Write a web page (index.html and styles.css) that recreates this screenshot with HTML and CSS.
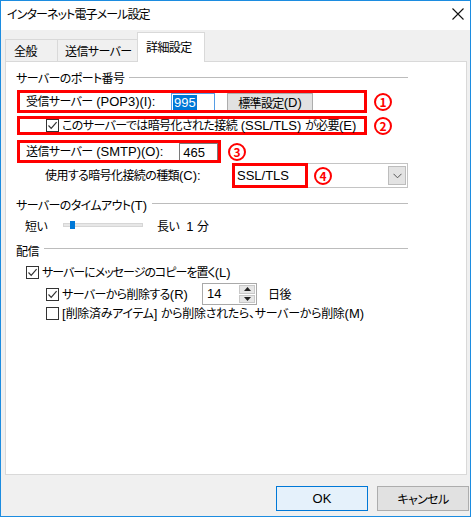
FILE: index.html
```html
<!DOCTYPE html>
<html lang="ja">
<head>
<meta charset="utf-8">
<title>インターネット電子メール設定</title>
<link rel="stylesheet" href="styles.css">
</head>
<body>
<div class="window">
  <div class="titlebar">
    <span class="title">インターネット電子メール設定</span>
    <svg class="close" width="12" height="12" viewBox="0 0 12 12"><path d="M0.5 0.5 L11.5 11.5 M11.5 0.5 L0.5 11.5" stroke="#111" stroke-width="1.1" fill="none"/></svg>
  </div>
  <div class="tabstrip">
    <div class="tab tab-general">全般</div>
    <div class="tab tab-send">送信サーバー</div>
    <div class="tab tab-adv active">詳細設定</div>
  </div>
  <div class="panel">
    <div class="group-head"><span class="gh-text">サーバーのポート番号</span><span class="gh-line"></span></div>

    <div class="line-row row-pop">
      <div class="mark box-pop">
        <span class="lbl lbl-pop">受信サーバー<span class="en"> (POP3)(I):</span></span>
        <span class="textbox tb-pop"><span class="sel en">995</span></span>
        <span class="btn btn-default">標準設定<span class="en">(D)</span></span>
      </div>
      <span class="badge">1</span>
    </div>

    <div class="line-row row-ssl">
      <div class="mark box-ssl">
        <span class="check on"><svg width="11" height="11" viewBox="0 0 11 11"><path d="M1.5 5.5 L4.2 8.3 L9.6 2.2" stroke="#333" stroke-width="1.2" fill="none"/></svg></span>
        <span class="chk-text">このサーバーでは暗号化された接続<span class="en"> (SSL/TLS) </span>が必要<span class="en">(E)</span></span>
      </div>
      <span class="badge">2</span>
    </div>

    <div class="line-row row-smtp">
      <div class="mark box-smtp">
        <span class="lbl lbl-smtp">送信サーバー<span class="en"> (SMTP)(O):</span></span>
        <span class="textbox tb-smtp"><span class="en">465</span></span>
      </div>
      <span class="badge">3</span>
    </div>

    <div class="line-row row-enc">
      <span class="lbl lbl-enc">使用する暗号化接続の種類<span class="en">(C):</span></span>
      <div class="combo">
        <span class="combo-val"><span class="en">SSL/TLS</span></span>
        <span class="badge badge-in">4</span>
        <span class="combo-fill"></span>
        <span class="combo-btn"><svg width="9" height="6" viewBox="0 0 9 6"><path d="M0.5 0.8 L4.5 4.8 L8.5 0.8" stroke="#555" stroke-width="1" fill="none"/></svg></span>
      </div>
    </div>

    <div class="group-head gh-timeout"><span class="gh-text">サーバーのタイムアウト<span class="en">(T)</span></span><span class="gh-line"></span></div>

    <div class="line-row row-slider">
      <span class="lbl lbl-short">短い</span>
      <span class="track"><span class="thumb"></span></span>
      <span class="lbl lbl-long">長い</span>
      <span class="lbl lbl-min"><span class="en">1 </span>分</span>
    </div>

    <div class="group-head gh-deliver"><span class="gh-text">配信</span><span class="gh-line"></span></div>

    <div class="line-row row-copy">
      <span class="check on"><svg width="11" height="11" viewBox="0 0 11 11"><path d="M1.5 5.5 L4.2 8.3 L9.6 2.2" stroke="#333" stroke-width="1.2" fill="none"/></svg></span>
      <span class="chk-text kana-tight">サーバーにメッセージのコピーを置く<span class="en">(L)</span></span>
    </div>

    <div class="line-row row-remove">
      <span class="chk-wrap">
        <span class="check on"><svg width="11" height="11" viewBox="0 0 11 11"><path d="M1.5 5.5 L4.2 8.3 L9.6 2.2" stroke="#333" stroke-width="1.2" fill="none"/></svg></span>
        <span class="chk-text">サーバーから削除する<span class="en">(R)</span></span>
      </span>
      <span class="spin">
        <span class="spin-val en">14</span>
        <span class="spin-btns">
          <span class="spin-btn"><svg width="7" height="4" viewBox="0 0 7 4"><path d="M0 4 L3.5 0 L7 4 Z" fill="#222"/></svg></span>
          <span class="spin-btn"><svg width="7" height="4" viewBox="0 0 7 4"><path d="M0 0 L3.5 4 L7 0 Z" fill="#222"/></svg></span>
        </span>
      </span>
      <span class="lbl lbl-days">日後</span>
    </div>

    <div class="line-row row-deleted">
      <span class="check"></span>
      <span class="chk-text kana-loose"><span class="en">[</span>削除済みアイテム<span class="en">] </span>から削除されたら、サーバーから削除<span class="en">(M)</span></span>
    </div>
  </div>
  <div class="footer">
    <span class="btn btn-ok"><span class="en">OK</span></span>
    <span class="btn btn-cancel">キャンセル</span>
  </div>
</div>
</body>
</html>
```

FILE: styles.css
```css
html, body {
  margin: 0;
  padding: 0;
}
body {
  width: 471px;
  height: 517px;
  overflow: hidden;
  font-family: "Noto Sans CJK JP", "Noto Sans", sans-serif;
  font-feature-settings: "palt" 1;
  font-size: 12px;
  line-height: 16px;
  letter-spacing: -0.6px;
  color: #000;
}
.en {
  font-family: "Liberation Sans", Arial, sans-serif;
  font-size: 13px;
  letter-spacing: 0;
  white-space: pre;
}
.kana-tight { letter-spacing: -1px; }
.kana-loose { letter-spacing: -0.3px; }
.window {
  width: 471px;
  height: 517px;
  box-sizing: border-box;
  border: 1px solid #1c8ce0;
  background: #f0f0f0;
  display: flex;
  flex-direction: column;
}
.titlebar {
  height: 29px;
  flex: none;
  background: #fff;
  display: flex;
  align-items: center;
  padding-left: 6px;
  padding-right: 5px;
}
.title {
  font-size: 12px;
  flex: 1;
  margin-top: -3px;
  letter-spacing: -0.9px;
}
.close {
  margin-top: -4px;
  margin-right: 1px;
}
.tabstrip {
  height: 31px;
  flex: none;
  display: flex;
  align-items: flex-end;
  padding-left: 4px;
  position: relative;
  z-index: 2;
}
.tab {
  box-sizing: border-box;
  height: 22px;
  border: 1px solid #d9d9d9;
  border-bottom: none;
  background: #f0f0f0;
  padding: 3px 0 0 8px;
  white-space: nowrap;
}
.tab-general { width: 53px; }
.tab-send { width: 81px; margin-left: -1px; padding-left: 7px; }
.tab-adv { width: 68px; margin-left: -1px; }
.tab.active {
  height: 30px;
  margin-bottom: -1px;
  background: #fff;
  padding-top: 6px;
}
.panel {
  height: 414px;
  box-sizing: border-box;
  margin: 0 3px 0 4px;
  background: #fff;
  border: 1px solid #d9d9d9;
  flex: none;
  display: flex;
  flex-direction: column;
}
.group-head {
  display: flex;
  align-items: flex-start;
  height: 16px;
  margin-top: 8px;
  padding-left: 10px;
  margin-right: 58px;
}
.gh-text {
  white-space: nowrap;
}
.gh-line {
  flex: 1;
  height: 1px;
  background: #bcbcbc;
  margin-top: 7px;
  margin-left: 5px;
}
.gh-timeout { margin-top: 9px; }
.gh-timeout .gh-line { margin-top: 6px; }
.gh-deliver { margin-top: 9px; }
.gh-deliver .gh-line { margin-top: 5px; }
.line-row {
  display: flex;
  align-items: center;
  white-space: nowrap;
}
.mark {
  box-sizing: border-box;
  border: 3px solid #ff0000;
  display: flex;
  align-items: center;
}
.badge {
  box-sizing: border-box;
  width: 18px;
  height: 18px;
  border: 2px solid #ff0000;
  border-radius: 50%;
  color: #ff0000;
  font-weight: bold;
  font-size: 12px;
  line-height: 14px;
  letter-spacing: 0;
  text-align: center;
  margin-left: 7px;
  flex: none;
}
.row-pop { margin: 4px 0 0 11px; }
.box-pop { width: 350px; height: 23px; padding-left: 6px; }
.lbl-pop { width: 145px; }
.textbox {
  box-sizing: border-box;
  height: 17px;
  background: #fff;
  display: flex;
  align-items: center;
  padding-left: 2px;
  line-height: 15px;
}
.tb-pop {
  width: 44px;
  border: 1px solid #569de5;
  border-bottom: none;
  padding-left: 1px;
}
.sel {
  background: #0078d7;
  color: #fff;
  padding: 0 1px 0 1px;
}
.btn {
  box-sizing: border-box;
  background: #e1e1e1;
  border: 1px solid #adadad;
  display: flex;
  align-items: center;
  justify-content: center;
}
.btn-default {
  width: 86px;
  height: 17px;
  margin-left: 12px;
  border-bottom: none;
  line-height: 15px;
}
.row-ssl { margin: 3px 0 0 11px; }
.box-ssl { width: 350px; height: 19px; padding-left: 26px; }
.check {
  box-sizing: border-box;
  width: 13px;
  height: 13px;
  border: 1px solid #333;
  background: #fff;
  display: inline-flex;
  align-items: center;
  justify-content: center;
  flex: none;
}
.chk-text { margin-left: 3px; }
.row-smtp { margin: 5px 0 0 11px; }
.box-smtp { width: 204px; height: 23px; padding-left: 6px; }
.lbl-smtp { width: 154px; }
.tb-smtp {
  width: 39px;
  border: 1px solid #7a7a7a;
  border-bottom: none;
  padding-left: 3px;
}
.row-enc { height: 25px; margin-left: 39px; }
.lbl-enc { width: 187px; }
.combo {
  box-sizing: border-box;
  width: 176px;
  height: 25px;
  border: 1px solid #c4c4c4;
  background: #fff;
  display: flex;
  align-items: center;
}
.combo-val {
  box-sizing: border-box;
  width: 76px;
  height: 25px;
  margin: -1px 0 -1px -1px;
  border: 3px solid #ff0000;
  padding-left: 2px;
  display: flex;
  align-items: center;
}
.badge-in { margin-left: 6px; }
.combo-fill { flex: 1; }
.combo-btn {
  box-sizing: border-box;
  width: 18px;
  height: 19px;
  margin-right: 1px;
  background: #e3e3e3;
  border: 1px solid #bdbdbd;
  display: flex;
  align-items: center;
  justify-content: center;
}
.row-slider { height: 16px; margin: 5px 0 0 19px; }
.lbl-short { width: 38px; }
.track {
  position: relative;
  box-sizing: border-box;
  width: 80px;
  height: 4px;
  background: #e7e7e7;
  border: 1px solid #d6d6d6;
  margin-top: -2px;
}
.thumb {
  position: absolute;
  left: 6px;
  top: -3px;
  width: 5px;
  height: 8px;
  background: #0078d7;
}
.lbl-long { margin-left: 14px; }
.lbl-min { margin-left: 7px; }
.row-copy { height: 16px; margin: 5px 0 0 20px; }
.row-remove { height: 22px; margin: 3px 0 0 40px; }
.chk-wrap { width: 156px; display: flex; align-items: center; }
.spin {
  box-sizing: border-box;
  width: 55px;
  height: 22px;
  border: 1px solid #a9a9a9;
  background: #fff;
  display: flex;
  align-items: center;
}
.spin-val { flex: 1; padding-left: 4px; }
.spin-btns {
  width: 16px;
  height: 18px;
  margin-right: 1px;
  display: flex;
  flex-direction: column;
  gap: 1px;
}
.spin-btn {
  flex: 1;
  background: #e6e6e6;
  border: 1px solid #c8c8c8;
  display: flex;
  align-items: center;
  justify-content: center;
}
.lbl-days { margin-left: 11px; }
.row-deleted { height: 16px; margin: 0 0 0 40px; }
.footer {
  display: flex;
  justify-content: flex-end;
  gap: 9px;
  padding: 11px 1px 0 0;
}
.btn-ok, .btn-cancel {
  width: 92px;
  height: 25px;
}
.btn-ok {
  background: #e5f1fb;
  border-color: #0078d7;
}
```
